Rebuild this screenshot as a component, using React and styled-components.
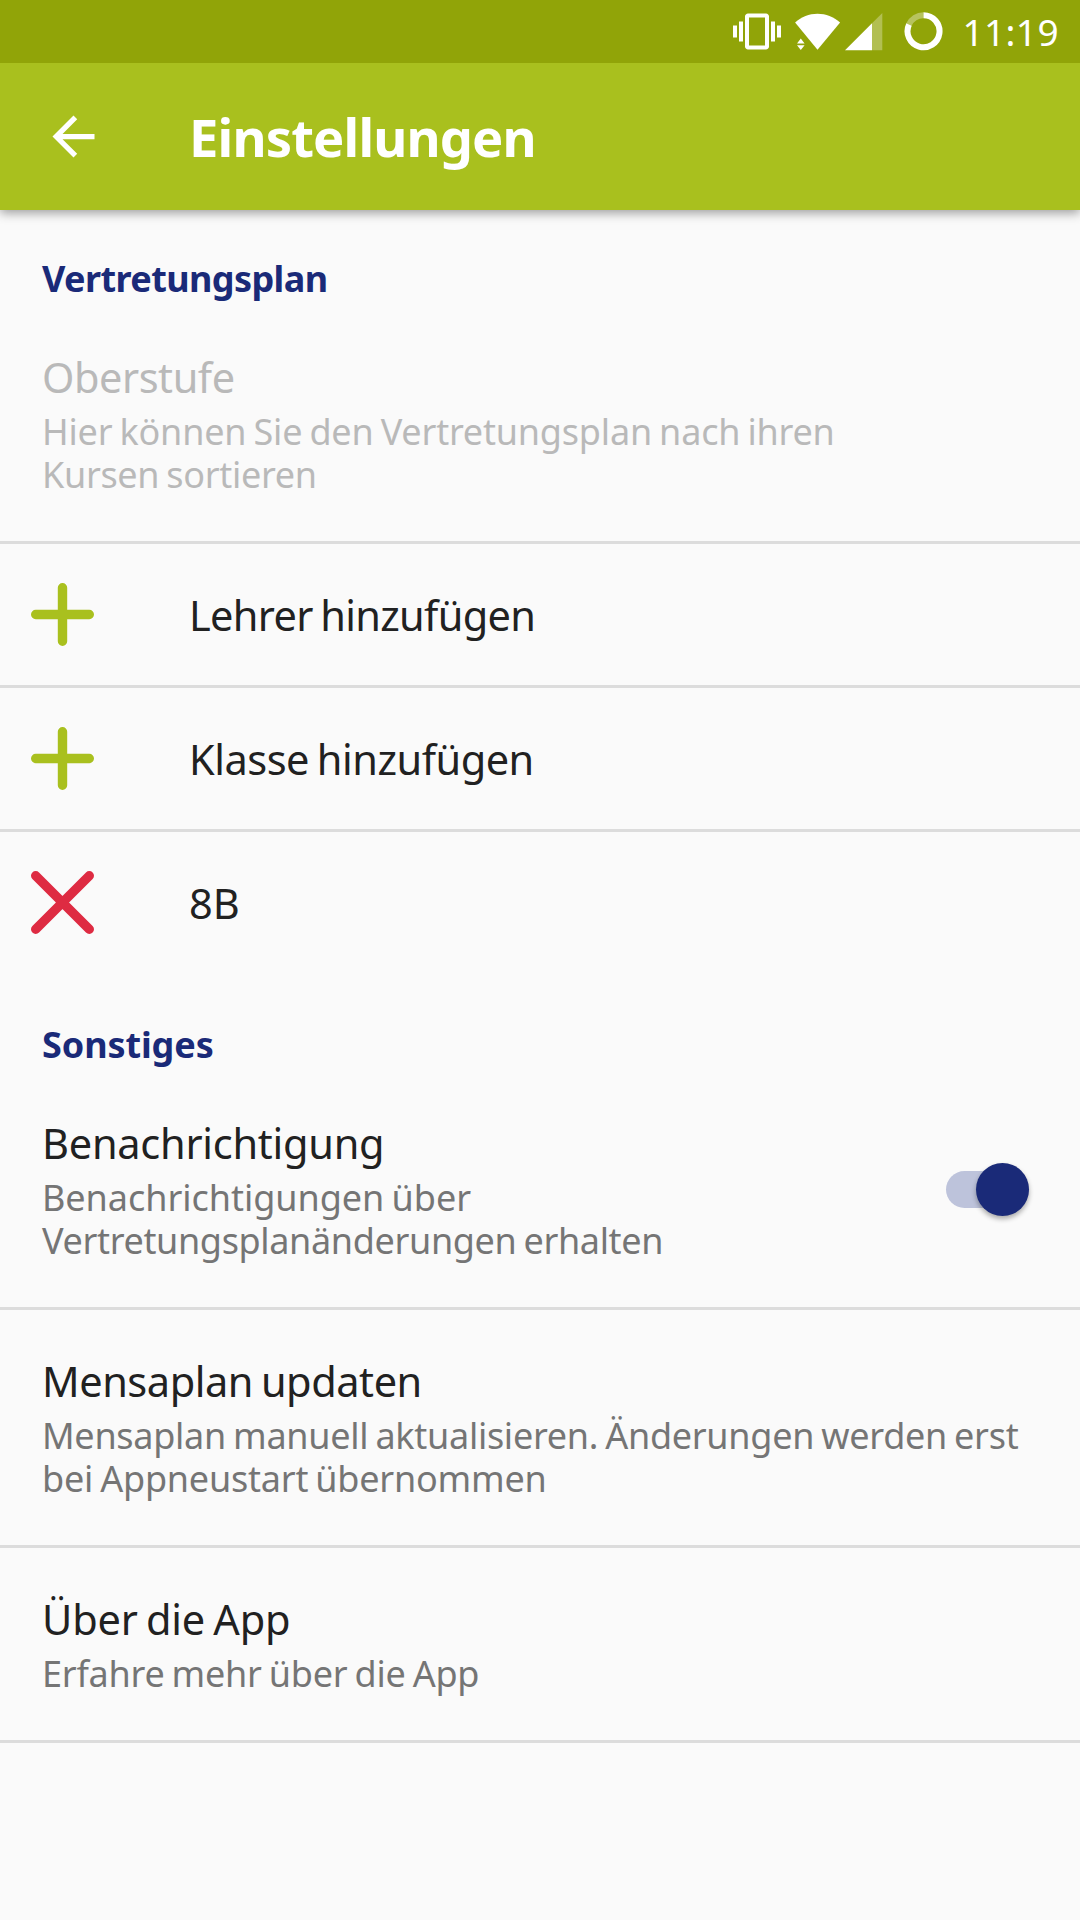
import React from 'react';
import styled, { createGlobalStyle } from 'styled-components';

const GlobalStyle = createGlobalStyle`
  * {
    box-sizing: border-box;
  }

  body {
    margin: 0;
    background: #fafafa;
    font-family: "Noto Sans", sans-serif;
  }
`;

const Screen = styled.div`
  width: 1080px;
  height: 1920px;
  background: #fafafa;
  overflow: hidden;
`;

const StatusBar = styled.div`
  position: relative;
  z-index: 1;
  height: 63px;
  padding-right: 21px;
  background: #91a408;
  display: flex;
  justify-content: flex-end;
  align-items: center;
`;

const StatusIcon = styled.svg`
  flex: none;
  width: ${({ $width }) => $width}px;
  height: 63px;
  margin-right: ${({ $gap }) => $gap}px;
  fill: #fff;
`;

const Clock = styled.span`
  color: #fff;
  font-size: 37px;
  line-height: 63px;
  letter-spacing: 0.4px;
`;

const AppBar = styled.header`
  height: 147px;
  padding: 0 42px;
  background: #a9c01e;
  box-shadow: 0 3px 10px rgba(0, 0, 0, 0.38);
  display: flex;
  align-items: center;
`;

const BackIcon = styled.svg`
  width: 63px;
  height: 63px;
  margin-right: 84px;
  fill: #fff;
`;

const Title = styled.h1`
  margin: 0;
  color: #fff;
  font-size: 52.5px;
  font-weight: 700;
  line-height: 76px;
  letter-spacing: -0.85px;
`;

const SectionHeader = styled.h2`
  height: 96px;
  margin: 0;
  padding: 47px 42px 0;
  color: #1a2a78;
  font-size: 36px;
  font-weight: 700;
  line-height: 44px;
  letter-spacing: ${({ $spacing }) => $spacing}px;
`;

const Item = styled.div`
  padding: 45px 42px;
  border-bottom: 3px solid #dcdcdc;
  display: flex;
  align-items: center;
  justify-content: space-between;
`;

const ItemTitle = styled.div`
  color: ${({ $disabled }) => ($disabled ? '#b9b9b9' : '#212121')};
  font-size: 41.5px;
  line-height: 52px;
  letter-spacing: ${({ $spacing = 0 }) => $spacing}px;
  word-spacing: -2.5px;
`;

const Summary = styled.div`
  margin-top: 7px;
  color: ${({ $disabled }) => ($disabled ? '#b9b9b9' : '#757575')};
  font-size: 36px;
  line-height: 43px;
  word-spacing: -2px;
`;

const SummaryLine = styled.span`
  display: block;
  white-space: nowrap;
  letter-spacing: ${({ $spacing }) => $spacing}px;
`;

const ActionRow = styled.div`
  height: 144px;
  padding-left: 30px;
  border-bottom: 3px solid ${({ $last }) => ($last ? 'transparent' : '#dcdcdc')};
  display: flex;
  align-items: center;
`;

const ActionIcon = styled.svg`
  width: 65px;
  height: 65px;
  margin-right: 94px;
  fill: none;
  stroke: ${({ $color }) => $color};
  stroke-width: 9.4;
  stroke-linecap: round;
`;

const Switch = styled.div`
  width: 83px;
  height: 37px;
  margin-right: 9px;
  border-radius: 19px;
  background: #bdc3db;
  display: flex;
  align-items: center;
  justify-content: flex-end;
`;

const Thumb = styled.div`
  width: 53px;
  height: 53px;
  border-radius: 50%;
  background: #1a2a78;
  box-shadow: 0 3px 5px rgba(0, 0, 0, 0.32);
`;

const actions = [
  { label: 'Lehrer hinzufügen', spacing: -0.67 },
  { label: 'Klasse hinzufügen', spacing: -0.47 },
  { label: '8B', spacing: 0, remove: true },
];

const oberstufe = {
  title: 'Oberstufe',
  spacing: -0.45,
  disabled: true,
  lines: [
    ['Hier können Sie den Vertretungsplan nach ihren', -0.2],
    ['Kursen sortieren', -0.32],
  ],
};

const others = [
  {
    title: 'Benachrichtigung',
    spacing: -0.25,
    checked: true,
    lines: [
      ['Benachrichtigungen über', -0.04],
      ['Vertretungsplanänderungen erhalten', -0.35],
    ],
  },
  {
    title: 'Mensaplan updaten',
    spacing: -0.44,
    lines: [
      ['Mensaplan manuell aktualisieren. Änderungen werden erst', -0.28],
      ['bei Appneustart übernommen', -0.22],
    ],
  },
  {
    title: 'Über die App',
    spacing: -0.15,
    lines: [['Erfahre mehr über die App', -0.24]],
  },
];

const Preference = ({ item }) => (
  <Item>
    <div>
      <ItemTitle $disabled={item.disabled} $spacing={item.spacing}>{item.title}</ItemTitle>
      <Summary $disabled={item.disabled}>
        {item.lines.map(([text, spacing]) => (
          <SummaryLine key={text} $spacing={spacing}>{text}</SummaryLine>
        ))}
      </Summary>
    </div>
    {item.checked && (
      <Switch>
        <Thumb />
      </Switch>
    )}
  </Item>
);

const Action = ({ action, last }) => (
  <ActionRow $last={last}>
    <ActionIcon viewBox="0 0 65 65" $color={action.remove ? '#de2b42' : '#a9c01e'}>
      {action.remove
        ? <path d="M5.7 5.7l53.6 53.6M59.3 5.7L5.7 59.3" />
        : <path d="M32.5 5.7v53.6M5.7 32.5h53.6" />}
    </ActionIcon>
    <ItemTitle $spacing={action.spacing}>{action.label}</ItemTitle>
  </ActionRow>
);

const StatusIcons = () => (
  <>
    <StatusIcon $width={48} $gap={14} viewBox="0 0 48 63">
      <path transform="translate(0 7.5) scale(2)" d="M0 15h2V9H0v6zm3 2h2V7H3v10zm19-8v6h2V9h-2zm-3 8h2V7h-2v10zM16.5 3h-9C6.67 3 6 3.67 6 4.5v15c0 .83.67 1.5 1.5 1.5h9c.83 0 1.5-.67 1.5-1.5v-15c0-.83-.67-1.5-1.5-1.5zM16 19H8V5h8v14z" />
    </StatusIcon>
    <StatusIcon $width={46} $gap={4.5} viewBox="0 0 46 63">
      <path d="M22.5 49.8L.1 22.4C6.5 17 14 13.7 22.5 13.7S38.5 17 45.1 22.4z" />
      <path d="M2 43.5L5.8 38.5l3.8 5zM2 45.2h7.6l-3.8 4.7z" />
    </StatusIcon>
    <StatusIcon $width={38} $gap={20.5} viewBox="0 0 38 63">
      <path fillOpacity="0.3" d="M37.3 13v37.3H27V23.3z" />
      <path d="M0 50.3L27 23.3v27z" />
    </StatusIcon>
    <StatusIcon $width={39} $gap={19.5} viewBox="0 0 39 63">
      <path d="M5 24.5A16 16 0 0 1 19.5 15.2" fill="none" stroke="#fff" strokeOpacity="0.35" strokeWidth="6" />
      <path d="M19.5 15.2A16 16 0 1 1 5 24.5" fill="none" stroke="#fff" strokeWidth="6" />
    </StatusIcon>
  </>
);

const App = () => {
  return (
    <Screen>
      <GlobalStyle />
      <StatusBar>
        <StatusIcons />
        <Clock>11:19</Clock>
      </StatusBar>
      <AppBar>
        <BackIcon viewBox="0 0 24 24">
          <path d="M20 11H7.83l5.59-5.59L12 4l-8 8 8 8 1.41-1.41L7.83 13H20v-2z" />
        </BackIcon>
        <Title>Einstellungen</Title>
      </AppBar>
      <SectionHeader $spacing={-0.6}>Vertretungsplan</SectionHeader>
      <Preference item={oberstufe} />
      {actions.map((action, i) => (
        <Action key={action.label} action={action} last={i === actions.length - 1} />
      ))}
      <SectionHeader $spacing={-0.1}>Sonstiges</SectionHeader>
      {others.map((item) => (
        <Preference key={item.title} item={item} />
      ))}
    </Screen>
  );
};

export default App;
